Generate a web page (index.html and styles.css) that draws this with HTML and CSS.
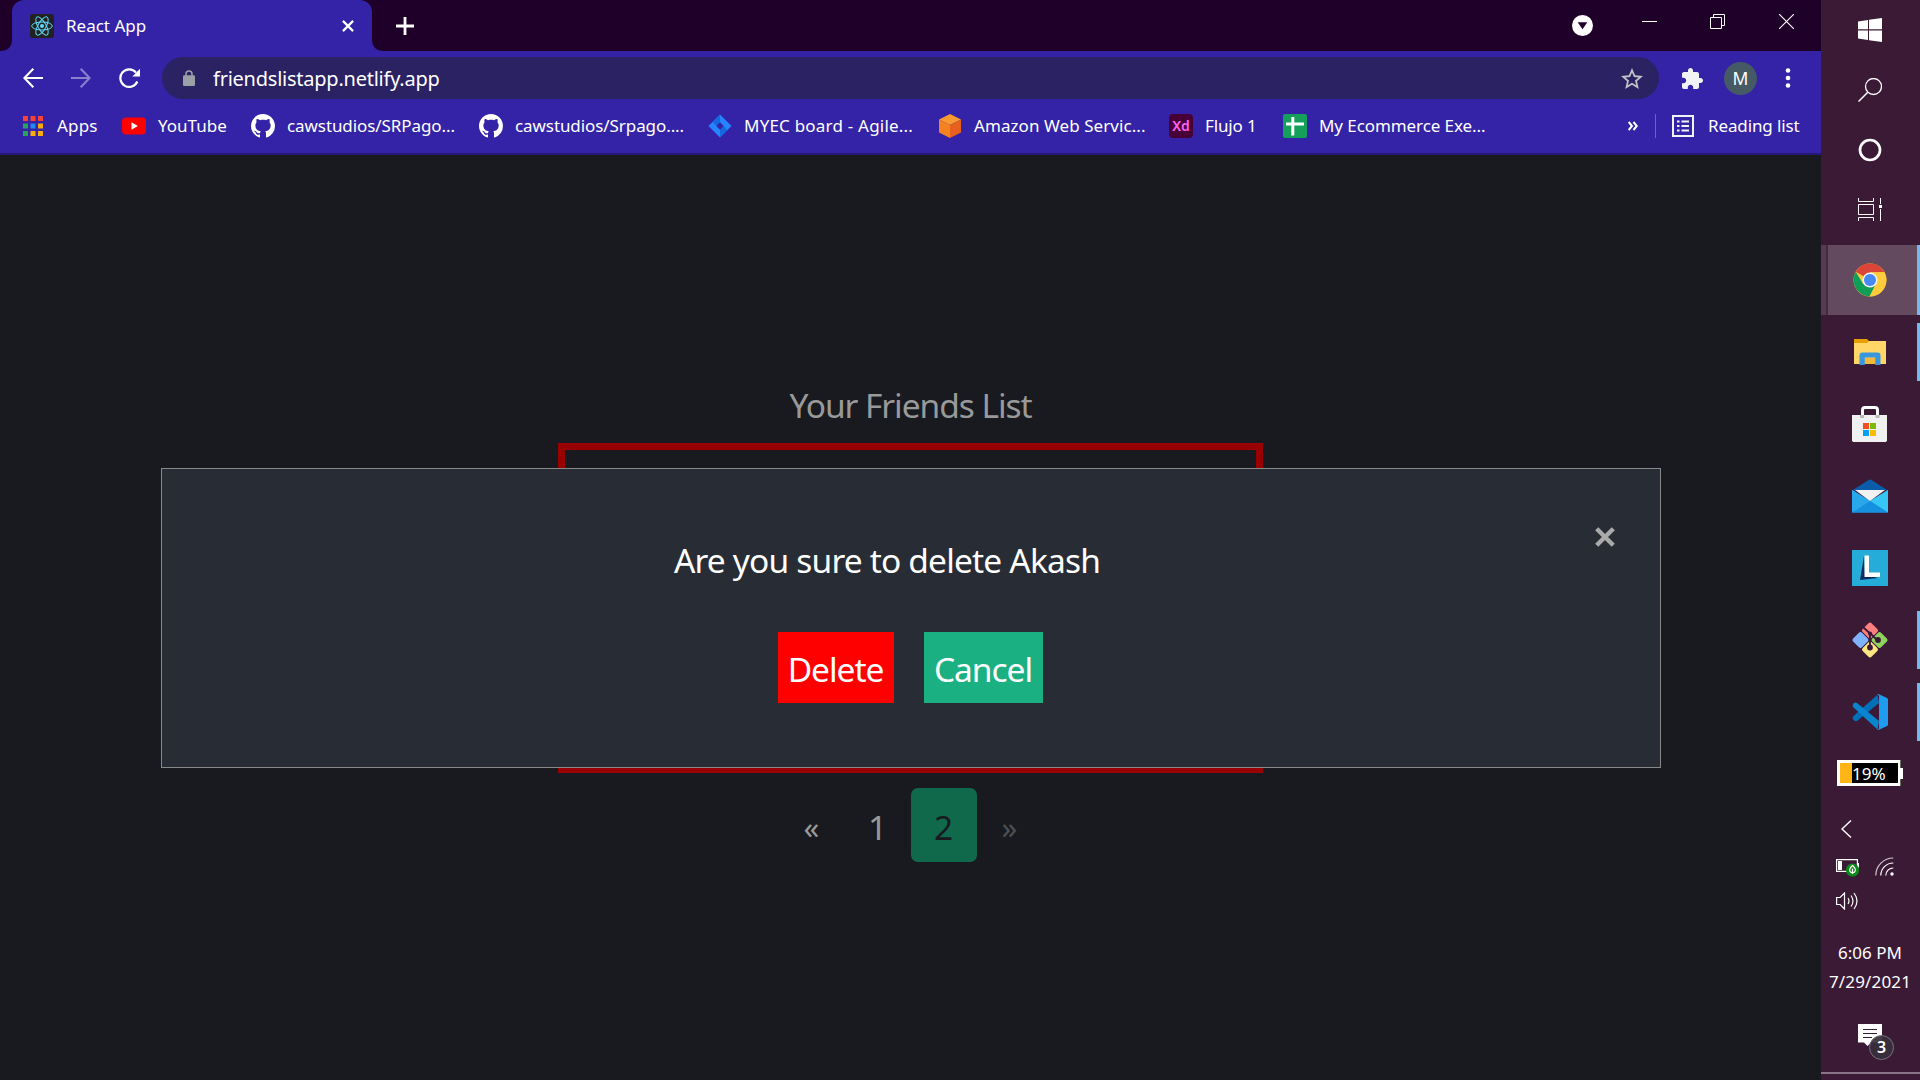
FILE: index.html
```html
<!DOCTYPE html>
<html lang="en">
<head>
<meta charset="utf-8">
<title>React App</title>
<link rel="stylesheet" href="styles.css">
</head>
<body>
<svg class="defs" width="0" height="0">
  <symbol id="github" viewBox="0 0 16 16"><path fill="#fff" d="M8 0C3.58 0 0 3.58 0 8c0 3.54 2.29 6.53 5.47 7.59.4.07.55-.17.55-.38 0-.19-.01-.82-.01-1.49-2.01.37-2.53-.49-2.69-.94-.09-.23-.48-.94-.82-1.13-.28-.15-.68-.52-.01-.53.63-.01 1.08.58 1.23.82.72 1.21 1.87.87 2.33.66.07-.52.28-.87.51-1.07-1.78-.2-3.64-.89-3.64-3.95 0-.87.31-1.59.82-2.15-.08-.2-.36-1.02.08-2.12 0 0 .67-.21 2.2.82.64-.18 1.32-.27 2-.27.68 0 1.36.09 2 .27 1.53-1.04 2.2-.82 2.2-.82.44 1.1.16 1.92.08 2.12.51.56.82 1.27.82 2.15 0 3.07-1.87 3.75-3.65 3.95.29.25.54.73.54 1.48 0 1.07-.01 1.93-.01 2.2 0 .21.15.46.55.38A8.013 8.013 0 0016 8c0-4.42-3.58-8-8-8z"/></symbol>
</svg>
<div class="screen">
  <div class="browser">
    <header class="tabstrip">
      <svg class="flare" width="12" height="51"><path fill="#3423a6" d="M12 51H0Q12 51 12 39z"/></svg>
      <div class="tab">
        <svg width="24" height="24" viewBox="0 0 24 24"><rect width="24" height="24" rx="2.5" fill="#222"/><g fill="none" stroke="#61dafb" stroke-width="1"><ellipse cx="12" cy="12" rx="10.3" ry="4"/><ellipse cx="12" cy="12" rx="10.3" ry="4" transform="rotate(60 12 12)"/><ellipse cx="12" cy="12" rx="10.3" ry="4" transform="rotate(120 12 12)"/></g><circle cx="12" cy="12" r="2" fill="#61dafb"/></svg>
        <span class="tab-title">React App</span>
        <svg width="12" height="12" viewBox="0 0 12 12"><path d="M.9.9l10.2 10.2M11.1.9L.9 11.1" stroke="#fff" stroke-width="2.2"/></svg>
      </div>
      <svg class="flare" width="12" height="51"><path fill="#3423a6" d="M0 51h12Q0 51 0 39z"/></svg>
      <svg class="newtab" width="18" height="18"><path d="M9 0v18M0 9h18" stroke="#fff" stroke-width="2.8"/></svg>
      <div class="win-controls">
        <svg width="21" height="21"><circle cx="10.5" cy="10.5" r="10.5" fill="#fff"/><path fill="#1e0029" d="M5.7 7.3h9.6l-4.8 7z"/></svg>
        <svg width="15" height="15"><path d="M0 7.5h15" stroke="#fff"/></svg>
        <svg width="15" height="15"><path fill="none" stroke="#fff" d="M.5 3.5h11v11H.5zM3.5 3.5v-3h11v11h-3"/></svg>
        <svg width="15" height="15"><path stroke="#fff" stroke-width="1.1" d="M0 0l15 15M15 0L0 15"/></svg>
      </div>
    </header>
    <div class="toolbar">
      <svg width="20" height="20"><path fill="none" stroke="#fff" stroke-width="2.1" d="M20 10H1.5M10.3.8L1.4 10l8.9 9.2"/></svg>
      <svg width="20" height="20"><path fill="none" stroke="#8b80cc" stroke-width="2.1" d="M0 10h18.5M9.7.8L18.6 10l-8.9 9.2"/></svg>
      <svg width="21" height="21"><path fill="none" stroke="#fff" stroke-width="2.2" d="M18.3 13.5A8.8 8.8 0 1 1 17 4.6"/><path fill="#fff" d="M21 .8v7.700h-7.700z"/></svg>
      <div class="address">
        <svg width="12" height="16"><path fill="none" stroke="#9aa0a6" stroke-width="1.5" d="M3 7V4a3 3 0 0 1 6 0v3"/><rect y="5.3" width="12" height="10.7" rx="1.2" fill="#9aa0a6"/></svg>
        <span class="url">friendslistapp.netlify.app</span>
        <svg width="22" height="21" viewBox="2 2 20 19"><path fill="#c3c2c9" d="M22 9.24l-7.190-.62L12 2 9.190 8.630 2 9.240l5.460 4.730L5.820 21 12 17.270 18.180 21l-1.630-7.030L22 9.240zM12 15.400l-3.760 2.270 1-4.280-3.320-2.880 4.380-.38L12 6.100l1.710 4.040 4.380.38-3.320 2.880 1 4.280L12 15.400z"/></svg>
      </div>
      <svg class="ext" width="21" height="21" viewBox="2 1 21 21"><path fill="#f1f3f4" d="M20.500 11H19V7c0-1.100-.9-2-2-2h-4V3.500C13 2.120 11.880 1 10.500 1S8 2.120 8 3.500V5H4c-1.100 0-1.990.9-1.990 2v3.800H3.500c1.490 0 2.700 1.210 2.700 2.700s-1.210 2.700-2.700 2.700H2V20c0 1.100.9 2 2 2h3.800v-1.500c0-1.490 1.210-2.700 2.700-2.700 1.490 0 2.700 1.210 2.700 2.700V22H17c1.100 0 2-.9 2-2v-4h1.500c1.380 0 2.500-1.120 2.500-2.500S21.880 11 20.500 11z"/></svg>
      <span class="avatar">M</span>
      <svg width="6" height="20"><g fill="#fff"><circle cx="3" cy="2.5" r="2.3"/><circle cx="3" cy="10" r="2.3"/><circle cx="3" cy="17.5" r="2.3"/></g></svg>
    </div>
    <nav class="bookmarks">
      <a><svg width="20" height="20"><g fill="#f8423a"><path d="M0 0h5v5H0zM7.500 0h5v5h-5zM15 0h5v5h-5z"/></g><path fill="#28a35a" d="M0 7.500h5v5H0zM0 15h5v5H0z"/><path fill="#2188f4" d="M7.500 7.500h5v5h-5z"/><path fill="#fbab0c" d="M15 7.500h5v5h-5zM7.500 15h5v5h-5zM15 15h5v5h-5z"/></svg><span class="bm-apps">Apps</span></a>
      <a><svg width="24" height="24"><rect y="3.5" width="24" height="17" rx="4" fill="#f00"/><path fill="#fff" d="M9.500 8.300v7.400l6.300-3.700z"/></svg><span>YouTube</span></a>
      <a><svg width="24" height="24"><use href="#github"/></svg><span class="bm-repo">cawstudios/SRPago...</span></a>
      <a><svg width="24" height="24"><use href="#github"/></svg><span class="bm-repo">cawstudios/Srpago....</span></a>
      <a><svg width="24" height="24"><path fill="#2684ff" d="M12 .5L23.500 12 12 23.500.5 12z"/><path fill="#1468e0" d="M12 .5v8L8.400 12 4.800 7.700zM12 23.500v-8l3.600-3.500 3.600 4.300z"/><path fill="#3423a6" d="M12 8.300l3.700 3.700-3.700 3.700L8.300 12z"/></svg><span class="bm-board">MYEC board - Agile...</span></a>
      <a><svg width="24" height="24"><path fill="#f9992f" d="M12 0l11 5.500L12 11 1 5.500z"/><path fill="#f58220" d="M1 5.500L12 11v13L1 18.500z"/><path fill="#e8601d" d="M23 5.500L12 11v13l11-5.500z"/></svg><span class="bm-aws">Amazon Web Servic...</span></a>
      <a><span class="xd">Xd</span><span class="bm-flujo">Flujo 1</span></a>
      <a><svg width="24" height="24"><rect width="24" height="24" rx="2" fill="#14a05a"/><path stroke="#fff" stroke-width="3" d="M9.800 3v18.500M3 10h18"/></svg><span class="bm-repo">My Ecommerce Exe...</span></a>
      <svg class="more" width="10" height="10"><path fill="none" stroke="#fff" stroke-width="2" d="M.7 1L4 5 .7 9M5.500 1l3.300 4-3.300 4"/></svg>
      <div class="reading"><svg width="22" height="22"><path fill="none" stroke="#f1f3f4" stroke-width="2" d="M1 1h20v20H1z"/><path stroke="#f1f3f4" stroke-width="2" d="M5 6.500h2.500M9.500 6.500h7.500M5 11h2.500M9.500 11h7.500M5 15.500h2.500M9.500 15.500h7.500"/></svg><span class="bm-reading">Reading list</span></div>
    </nav>
    <main class="page">
      <h1 class="heading">Your Friends List</h1>
      <div class="list-box"></div>
      <div class="pagination">
        <span class="pg arrow">«</span><span class="pg">1</span><span class="pg active">2</span><span class="pg arrow off">»</span>
      </div>
      <div class="modal">
        <p class="question">Are you sure to delete Akash</p>
        <svg class="modal-close" width="20" height="20"><path stroke="#aaa" stroke-width="4.4" d="M1.700 1.700l16.600 16.600M18.300 1.700L1.700 18.300"/></svg>
        <div class="actions"><button class="btn delete">Delete</button><button class="btn cancel">Cancel</button></div>
      </div>
    </main>
  </div>
  <aside class="taskbar">
    <div class="slot sys"><svg width="24" height="24"><path fill="#fff" d="M0 3.400L10 2v9.300H0zM11 1.800L24 0v11.300H11zM0 12.500h10V22L0 20.600zM11 12.500h13V24l-13-1.800z"/></svg></div>
    <div class="slot sys"><svg width="24" height="24"><circle cx="15.5" cy="8.5" r="8" fill="none" stroke="#fff" stroke-width="1.3"/><path stroke="#fff" stroke-width="1.5" d="M9.800 14.200L.5 23.500"/></svg></div>
    <div class="slot sys"><svg width="24" height="24"><circle cx="12" cy="12" r="10" fill="none" stroke="#fff" stroke-width="2.700"/></svg></div>
    <div class="slot sys"><svg width="24" height="24"><path fill="none" stroke="#fff" d="M.5 0v3.500h15V0M.5 6.500h15v10H.5zM.5 23v-3.500h15V23M22.500 0v6M22.500 11v12"/><path fill="#fff" d="M21 7h3v3h-3z"/></svg></div>
    <div class="slot app current"><svg width="34" height="34" viewBox="0 0 34 34"><circle cx="17" cy="17" r="16.5" fill="#fdcb3c"/><path fill="#db4437" d="M17 17L2.700 8.800A16.500 16.500 0 0 1 31.500 9.300H17z"/><path fill="#0f9d58" d="M2.700 8.800L10.200 21l6.800 2.500 6-3-6.500 13A16.500 16.500 0 0 1 2.700 8.800z"/><path fill="#fdcb3c" d="M17 9.300h14.500A16.500 16.500 0 0 1 16.600 33.500l7.100-12.600z"/><circle cx="17" cy="17" r="7.6" fill="#f4f4f4"/><circle cx="17" cy="17" r="6" fill="#4688f4"/></svg></div>
    <div class="slot app open"><svg width="34" height="28"><path fill="#e8a000" d="M1 1h13l2 2v3H1z"/><path fill="#ffd768" d="M1 5h13l2-2h17v23H1z"/><path fill="#3a96dd" d="M6.500 27V17.500a3 3 0 0 1 3-3h15a3 3 0 0 1 3 3V27h-5.300v-7.500H11.800V27z"/><path fill="#f4b93a" d="M12 20h10v6H12z"/></svg></div>
    <div class="slot app"><svg width="36" height="36"><path fill="none" stroke="#fff" stroke-width="3" d="M10.500 13V4a2.500 2.500 0 0 1 2.500-2.500h10A2.500 2.500 0 0 1 25.500 4v9"/><path fill="#f1f1f1" d="M0 9h35v25.500l-1 1.500H1l-1-1.500z"/><path fill="#bbb" d="M8 9h4v3H8zM23.500 9h4v3h-4z"/><path fill="#f25022" d="M11 17h6v6h-6z"/><path fill="#7fba00" d="M18 17h6v6h-6z"/><path fill="#00a4ef" d="M11 24h6v6h-6z"/><path fill="#ffb900" d="M18 24h6v6h-6z"/></svg></div>
    <div class="slot app"><svg width="36" height="34"><path fill="#0a5ba8" d="M0 11.500L17 .8q1-.6 2 0l17 10.700z"/><path fill="#1a9be8" d="M0 11l18 11 18-11v22.500H0z"/><path fill="#36c5f4" d="M36 11L18 22l18 11.500z"/><path fill="#28a8ea" d="M0 11l18 11L0 33.500z"/><path fill="#1490df" d="M0 33.500h36L18 22z"/><path fill="#28a8ea" d="M0 11l18 11L0 33.500z"/><path fill="#f2f2f2" d="M3 11h30l-15 11z"/></svg></div>
    <div class="slot app"><svg width="36" height="36"><path fill="#25acd9" d="M0 0h36v36H0z"/><path fill="#0b2d62" d="M12 6L8 30l18-2-13-4z"/><path fill="#fff" d="M12.500 5.500H17V22.500h11V27H12.500z"/></svg></div>
    <div class="slot app open"><svg width="36" height="36"><g transform="rotate(45 18 18)"><rect x="5" y="5" width="12.500" height="12.500" rx="2.500" fill="#ff7f7f"/><rect x="18.500" y="5" width="12.500" height="12.500" rx="2.500" fill="#8ed35c"/><rect x="5" y="18.500" width="12.500" height="12.500" rx="2.500" fill="#80b3ff"/><rect x="18.500" y="18.500" width="12.500" height="12.500" rx="2.500" fill="#ffe680"/></g><g stroke="#3b1a36" stroke-width="1.800" fill="#3b1a36"><path fill="none" d="M11.500 5.500l6.500 6v14M18 11l7 7"/><circle cx="18" cy="25.500" r="2"/><circle cx="26" cy="18" r="2"/><circle cx="18" cy="11.500" r="1.200"/></g></svg></div>
    <div class="slot app open"><svg width="36" height="36"><path fill="#0070b8" d="M1 22.500L25.500.8 27 9 5 27q-1.500.8-3-.5l-1-1.200q-.8-1.500 0-2.800z"/><path fill="#0b84d0" d="M1 13L25.500 35.500 27 27 5 9Q3.500 8 2 9.300L1 10.500q-.8 1.300 0 2.500z"/><path fill="#1f9cf0" d="M26.500 0L35 4q1 .5 1 1.500v25q0 1-1 1.500l-8.500 4q-1 .3-1.500-.5 2 .5 2-1.500V2q0-2-2-1.500.5-.8 1.500-.5z"/></svg></div>
    <div class="meter"><svg width="66" height="26"><path fill="#fff" d="M0 0h64v26H0z"/><path fill="#fff" d="M64 8h2v11h-2z"/><path fill="#000" d="M3 3h58v20H3z"/><path fill="#ffb515" d="M3 3h12v20H3z"/><path fill="#66715c" d="M63 0h1v8h-1zM63 19h1v7h-1z"/></svg><span class="meter-text">19%</span></div>
    <svg class="chev" width="11" height="18"><path fill="none" stroke="#fff" stroke-width="1.4" d="M10 .5L1 9l9 8.500"/></svg>
    <div class="tray">
      <svg width="24" height="20"><path fill="none" stroke="#fff" stroke-width="1.2" d="M.6 2.600h20.800v11.800H.6z"/><path fill="#fff" d="M2 4h4v9H2zM22 6h1v5h-1z"/><circle cx="16.5" cy="13" r="6.6" fill="#0d8a1a"/><path fill="none" stroke="#fff" stroke-width="1.2" d="M16.500 17V11.500M16.500 8.500q-4.500 4-2 6.500l2 1 2-1q2.500-2.500-2-6.500z"/></svg>
      <svg width="19" height="19"><g fill="none" stroke="#fff" stroke-width="1.2"><path opacity=".75" d="M.8 18.500A17.500 17.500 0 0 1 18.300 1"/><path d="M5.800 18.500A12.500 12.500 0 0 1 18.300 6M10.800 18.500a7.500 7.500 0 0 1 7.500-7.500"/></g><circle cx="17" cy="17" r="1.7" fill="#fff"/></svg>
      <svg width="24" height="18"><path fill="none" stroke="#fff" stroke-width="1.2" d="M.6 5.500h3.500L8.500 1v16l-4.400-4.500H.6zM12 6q2 3 0 6M15 3.500q4 5.500 0 11M18 1q6 8 0 16"/></svg>
    </div>
    <div class="clock"><span>6:06 PM</span><span class="date">7/29/2021</span></div>
    <div class="notify"><svg width="38" height="37"><path fill="#fff" d="M0 0h24v18.500H13L9.500 22 6 18.500H0z"/><path stroke="#3b1a36" d="M5 5.500h14M5 9.500h14M5 13.500h9"/><circle cx="23.5" cy="23.5" r="12" fill="#38303b" fill-opacity=".93" stroke="#777079"/></svg><span class="badge">3</span></div>
    <div class="peek"></div>
  </aside>
</div>
</body>
</html>
```
FILE: styles.css
```css
* { box-sizing: border-box; }
body { margin: 0; font-family: "Noto Sans", "Open Sans", sans-serif; color: #fff; overflow: hidden; background: #181a1f; }
svg { display: block; flex: none; }
.defs { position: absolute; }
span { white-space: nowrap; }
.screen { display: flex; width: 1920px; height: 1080px; }
.browser { width: 1821px; display: flex; flex-direction: column; }

.tabstrip { height: 51px; background: #1e0029; display: flex; align-items: center; }
.tab { width: 360px; height: 51px; padding: 0 18px; display: flex; align-items: center; gap: 12px; background: #3423a6; border-radius: 12px 12px 0 0; font-size: 17px; }
.tab-title { flex: 1; }
.newtab { margin-left: 12px; }
.win-controls { margin-left: auto; padding-right: 27px; display: flex; align-items: center; }
.win-controls svg { margin-left: 54px; margin-bottom: 8px; }
.win-controls svg:first-child { margin: 0 -5px 0 0; }
.win-controls svg:nth-child(3) { margin-left: 53px; }

.toolbar { height: 54px; padding: 0 30px 0 23px; background: #3423a6; display: flex; align-items: center; gap: 28px; }
.address { flex: none; width: 1497px; height: 42px; margin-left: -6px; padding: 0 16px 0 21px; border-radius: 21px; background: #2b2263; display: flex; align-items: center; gap: 18px; }
.url { flex: 1; font-size: 20px; letter-spacing: -.24px; }
.ext { margin-left: -5px; }
.avatar { width: 33px; height: 33px; margin: 0 0 0 -7px; border-radius: 50%; background: #455a64; font-size: 17.5px; line-height: 33px; text-align: center; }

.bookmarks { height: 50px; padding: 0 0 7px 23px; background: #3423a6; border-bottom: 2px solid #251879; display: grid; grid-template-columns: 99px 129px 228px 229px 230px 231px 114px 345px 27px 1fr; align-items: center; font-size: 17px; }
.bookmarks a, .reading { display: flex; align-items: center; gap: 12px; }
.bookmarks a:first-child { gap: 14px; }
.bm-apps { letter-spacing: .2px; }
.bm-repo { letter-spacing: -.08px; }
.bm-board { letter-spacing: .21px; }
.bm-aws { letter-spacing: .07px; }
.bm-flujo, .bm-reading { letter-spacing: -.12px; }
.reading { height: 24px; padding-left: 16px; gap: 14px; border-left: 1px solid #6c60c0; }
.xd { width: 24px; height: 24px; border-radius: 4px; background: #470137; color: #ff61f6; font-size: 14px; font-weight: 600; line-height: 23px; text-align: center; }

.page { position: relative; flex: 1; background: #181a1f; display: flex; flex-direction: column; align-items: center; color: #999; font-size: 33.5px; }
.heading { margin: 218px 0 0; height: 70px; font-size: 33.5px; font-weight: 400; line-height: 64px; letter-spacing: -1.05px; }
.list-box { width: 705px; height: 330px; border: 7px solid #900; }
.pagination { display: flex; margin-top: 15px; height: 74px; }
.pg { width: 66px; line-height: 78px; text-align: center; }
.pg.arrow { font-size: 31px; }
.pg.active { background: #11694c; color: #181a1f; border-radius: 7px; }
.pg.off { color: #4d4d4f; }
.modal { position: absolute; left: 161px; top: 313px; width: 1500px; height: 300px; background: #282c34; border: 1px solid #888; color: #fff; }
.question { margin: 0; padding: 59px 48px 0 0; text-align: center; line-height: 64px; letter-spacing: -.82px; }
.modal-close { position: absolute; right: 45px; top: 58px; }
.actions { display: flex; justify-content: center; gap: 30px; padding: 40px 2px 0 0; }
.btn { height: 71px; border: 0; padding: 3px 0 0; color: #fff; font: inherit; letter-spacing: -1.05px; }
.delete { width: 116px; background: #f00; }
.cancel { width: 119px; background: #1bb081; }

.taskbar { width: 99px; background: #3b1a36; display: flex; flex-direction: column; }
.slot { display: flex; align-items: center; justify-content: center; width: 99px; padding-right: 1px; flex: none; }
.sys { height: 60px; }
.app { height: 70px; margin-bottom: 2px; background: linear-gradient(#76b9ed, #76b9ed) no-repeat right center / 0 58px; }
.open { background-size: 3px 58px; }
.current { margin-top: 5px; background: linear-gradient(90deg, #563b52 5px, #452a41 5px 7px, #634a5f 7px 96px, #76b9ed 96px); }
.meter { position: relative; margin: 11px 0 0 16px; width: 66px; height: 26px; }
.meter-text { position: absolute; left: 15px; top: 1px; font-size: 17px; line-height: 26px; }
.chev { margin: 34px 0 0 20px; }
.tray { display: grid; grid-template-columns: 39px 24px; row-gap: 15px; margin: 19px 0 0 15px; }
.clock { margin-top: 28px; padding-right: 1px; display: flex; flex-direction: column; align-items: center; font-size: 17px; line-height: 29px; }
.date { letter-spacing: .15px; }
.notify { position: relative; margin: 28px 0 0 37px; height: 37px; }
.badge { position: absolute; left: 17px; top: 12px; width: 13px; text-align: center; font-size: 16px; font-weight: 600; line-height: 23px; }
.peek { margin-top: 11px; height: 2px; background: #8a7488; }
```
